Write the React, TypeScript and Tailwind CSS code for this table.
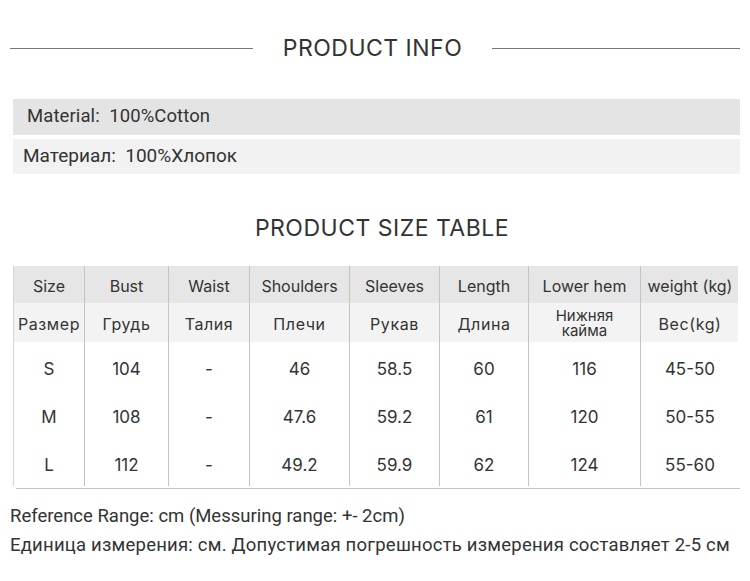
import React from 'react';

const cols = ['Size', 'Bust', 'Waist', 'Shoulders', 'Sleeves', 'Length', 'Lower hem', 'weight (kg)'];
const colsRu = ['Размер', 'Грудь', 'Талия', 'Плечи', 'Рукав', 'Длина', 'Нижняя\nкайма', 'Вес(kg)'];
const rows = [
  ['S', '104', '-', '46', '58.5', '60', '116', '45-50'],
  ['M', '108', '-', '47.6', '59.2', '61', '120', '50-55'],
  ['L', '112', '-', '49.2', '59.9', '62', '124', '55-60'],
];

const grid = 'grid grid-cols-[70px_84px_81px_100px_90px_89px_112px_99px]';

const App: React.FC = () => {
  return (
    <div className="w-[750px] h-[581px] bg-white text-[#333] overflow-hidden font-['Inter',sans-serif]">
      {/* Product info heading */}
      <div className="flex items-center pt-[35px] px-[10px]">
        <div className="w-[243px] h-px bg-[#777]" />
        <div className="flex-1 text-center text-[23px] tracking-[0.5px] leading-[26px]">PRODUCT INFO</div>
        <div className="w-[248px] h-px bg-[#777]" />
      </div>

      <div className="mt-[38px] ml-[13px] w-[727px] font-['Roboto',sans-serif]">
        <div className="h-[36px] bg-[#e4e4e4] flex items-center pl-[14px] text-[18.5px] tracking-[0.1px]">Material:&nbsp;&nbsp;100%Cotton</div>
        <div className="h-[35px] mt-[4px] bg-[#f2f2f2] flex items-center pl-[10px] text-[19px]">Материал:&nbsp;&nbsp;100%Хлопок</div>
      </div>

      <div className="mt-[41px] text-center text-[23px] tracking-[0.5px] leading-[26px] pl-[14px]">PRODUCT SIZE TABLE</div>

      {/* Size table */}
      <div className="mt-[25px] ml-[13px] w-[725px] border-l border-[#d6d6d6] text-[16px]">
        <div className={`${grid} h-[37px] bg-[#e6e6e6]`}>
          {cols.map((c, i) => (
            <div key={c} className={`flex items-center justify-center pt-[2px] ${i > 0 ? 'border-l border-[#c4c4c4]' : ''}`}>{c}</div>
          ))}
        </div>
        <div className={`${grid} h-[39px] bg-[#f3f3f3]`}>
          {colsRu.map((c, i) => (
            <div
              key={c}
              className={`flex items-center justify-center text-center whitespace-pre-line ${i === 6 ? 'text-[15px] leading-[15px]' : 'text-[16px] tracking-[0.6px] pt-[2px]'} ${i > 0 ? 'border-l border-[#c4c4c4]' : ''}`}
            >
              {c}
            </div>
          ))}
        </div>
        {rows.map((r) => (
          <div key={r[0]} className={`${grid} h-[48px]`}>
            {r.map((v, i) => (
              <div key={i} className={`flex items-center justify-center pt-[7px] text-[17px] ${i > 0 ? 'border-l border-[#c4c4c4]' : ''}`}>{v}</div>
            ))}
          </div>
        ))}
      </div>
      <div className="ml-[16px] mt-[2px] w-[724px] h-px bg-[#c4c4c4]" />

      <div className="mt-[13px] ml-[10px] font-['Roboto',sans-serif] text-[18.5px] leading-[29px]">
        <div>Reference Range: cm (Messuring range: +- 2cm)</div>
        <div className="tracking-[0.22px]">Единица измерения: см. Допустимая погрешность измерения составляет 2-5 см</div>
      </div>
    </div>
  );
};

export default App;
